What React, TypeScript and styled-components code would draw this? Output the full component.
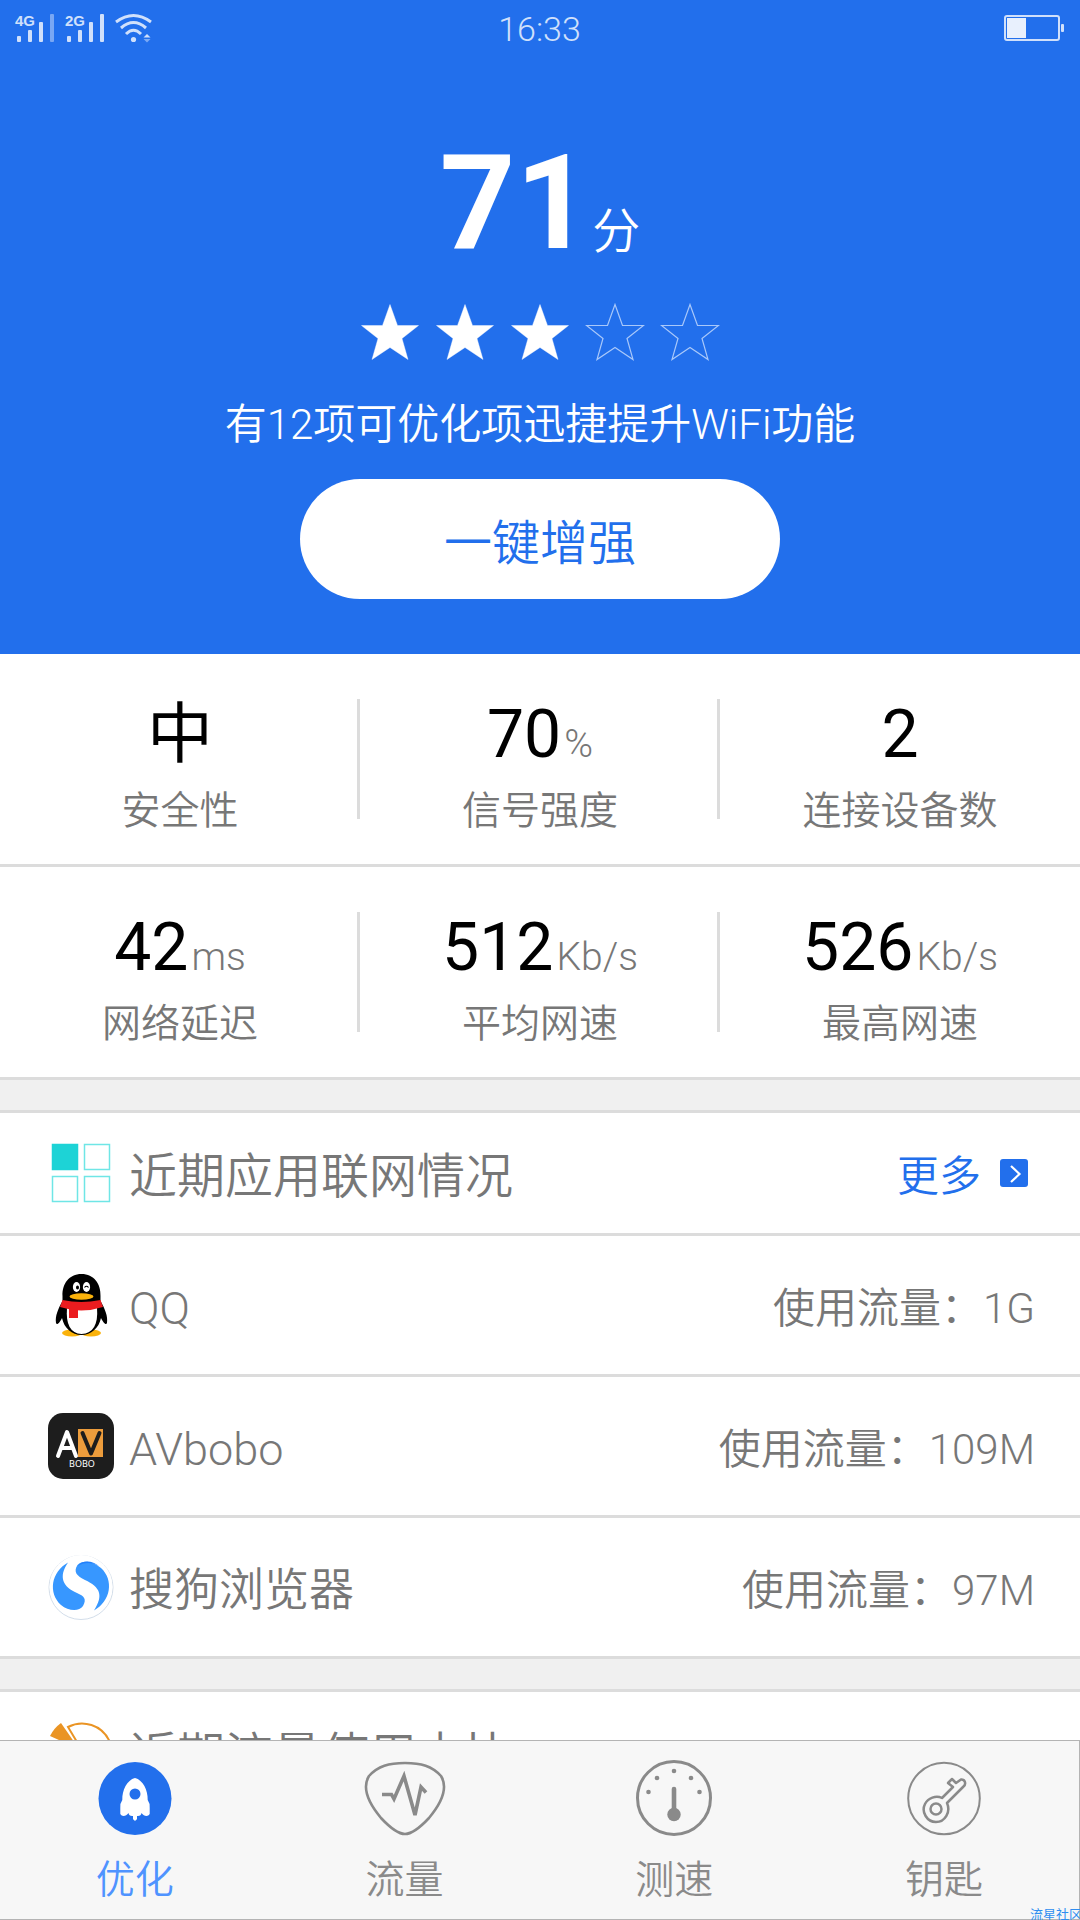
import React from 'react';
import styled, { createGlobalStyle } from 'styled-components';

const GlobalStyle = createGlobalStyle`
  * { box-sizing: border-box; }
  body {
    margin: 0;
    background: #f0f0f0;
    color: #777;
    font-family: Roboto, "Noto Sans CJK SC", sans-serif;
    font-weight: 350;
  }
  button { font-family: inherit; font-weight: inherit; }
  a { color: inherit; text-decoration: none; }
`;

const Screen = styled.div`
  position: relative;
  display: flex;
  flex-direction: column;
  height: 100vh;
  overflow: hidden;
`;

const Content = styled.main`
  flex: 1;
  min-height: 0;
  overflow-y: auto;
  scrollbar-width: none;
`;

const Hero = styled.header`
  display: flex;
  flex-direction: column;
  align-items: center;
  padding-bottom: 55px;
  background: #226fec;
  color: #fff;
`;

const StatusBar = styled.div`
  display: grid;
  grid-template-columns: 1fr auto 1fr;
  align-items: center;
  align-self: stretch;
  height: 56px;
  padding: 0 16px 0 15px;
  color: #d0e0fb;
`;

const Signals = styled.div`
  display: flex;
  gap: 11px;
`;

const Clock = styled.time`
  padding-top: 2px;
  font-size: 34px;
  line-height: 54px;
`;

const BatterySlot = styled.div`
  display: flex;
  justify-content: flex-end;
`;

const Score = styled.div`
  display: flex;
  align-items: baseline;
  gap: 1px;
  margin-top: 81px;
  font-size: 132px;
  line-height: 132px;
  font-weight: 700;
`;

const ScoreUnit = styled.span`
  font-size: 48px;
  line-height: 48px;
  font-weight: 350;
`;

const Stars = styled.div`
  display: flex;
  gap: 15px;
  margin: 34px 0;
`;

const Summary = styled.p`
  margin: 0 0 24px;
  font-size: 42px;
  line-height: 60px;
`;

const BoostButton = styled.button`
  width: 480px;
  height: 120px;
  border: 0;
  border-radius: 60px;
  background: #fff;
  color: #226fec;
  font-size: 48px;
`;

const StatGrid = styled.section`
  display: grid;
  grid-template-columns: repeat(3, 1fr);
  background: #fff;
`;

const StatCell = styled.div`
  display: flex;
  flex-direction: column;
  align-items: center;
  gap: 16px;
  padding: 45px 0 29px;
  border-bottom: 3px solid #dcdcdc;
  background: linear-gradient(#dcdcdc, #dcdcdc) right center / 3px 120px no-repeat;
  &:nth-child(3n) { background: none; }
`;

const StatValue = styled.div`
  color: #000;
  font-size: 66px;
  line-height: 72px;
  font-weight: 400;
`;

const StatUnit = styled.span`
  margin-left: 3px;
  color: #777;
  font-size: 39px;
  line-height: 39px;
  font-weight: 350;
`;

const StatLabel = styled.div`
  font-size: 39px;
  line-height: 48px;
`;

const Card = styled.section`
  margin-top: 30px;
  border-top: 3px solid #dcdcdc;
  background: #fff;
`;

const CardHeader = styled.div`
  display: flex;
  align-items: center;
  gap: 15px;
  height: 123px;
  padding: 0 51px 0 48px;
  border-bottom: 3px solid #dcdcdc;
`;

const CardTitle = styled.h2`
  flex: 1;
  margin: 0;
  padding-top: 8px;
  font-size: 48px;
  line-height: 60px;
  font-weight: 350;
`;

const MoreLink = styled.a`
  display: flex;
  align-items: center;
  gap: 19px;
  color: #226fec;
  font-size: 42px;
  line-height: 60px;
`;

const MoreText = styled.span`
  padding-top: 8px;
`;

const AppList = styled.ul`
  margin: 0;
  padding: 0;
  list-style: none;
`;

const AppRow = styled.li`
  display: flex;
  align-items: center;
  gap: 15px;
  height: 141px;
  padding: 0 45px 0 48px;
  border-bottom: 3px solid #dcdcdc;
`;

const AppName = styled.span`
  flex: 1;
  padding-top: 8px;
  font-size: 45px;
  line-height: 60px;
`;

const Usage = styled.span`
  padding-top: 8px;
  font-size: 42px;
  line-height: 60px;
`;

const TabBar = styled.nav`
  display: grid;
  grid-template-columns: repeat(4, 1fr);
  height: 180px;
  border: 1px solid #b4b4b4;
  border-left: 0;
  background: #f7f7f7;
`;

const Tab = styled.a<{ $active?: boolean }>`
  display: flex;
  flex-direction: column;
  align-items: center;
  gap: 12px;
  padding-top: 17px;
  color: ${(p) => (p.$active ? '#4f93ff' : '#8a8a8a')};
  font-size: 39px;
  line-height: 60px;
`;

const Watermark = styled.span`
  position: absolute;
  right: -2px;
  bottom: -4px;
  color: #2f8ef0;
  font-size: 13px;
  line-height: 18px;
  font-weight: 400;
`;

function Signal({ label, dim }: { label: string; dim?: boolean }) {
  return (
    <svg width="39" height="30" viewBox="0 0 39 30" fill="#d0e0fb">
      <text x="0" y="13" fontSize="15" fontWeight="700" fontFamily='"Liberation Sans", sans-serif'>{label}</text>
      <rect x="2" y="23" width="4" height="6" rx="1" />
      <rect x="13" y="17" width="4" height="12" rx="1" />
      <rect x="24" y="9" width="4" height="20" rx="1" />
      <rect x="35" y="1" width="4" height="28" rx="1" opacity={dim ? 0.5 : 1} />
    </svg>
  );
}

function WifiSignal() {
  return (
    <svg width="38" height="30" viewBox="0 0 38 30" fill="none" stroke="#d0e0fb" strokeWidth="3">
      <path d="M1 9Q18.500 -4 36 9" />
      <path d="M6 15Q18.500 4 31 15" />
      <path d="M11 21Q18.500 13.500 26 21" />
      <circle cx="18.500" cy="26.500" r="2.600" fill="#d0e0fb" stroke="none" />
      <path d="M28.500 24.500l3.500-3.500 3.500 3.500z" fill="#d0e0fb" stroke="none" />
      <path d="M28.500 26l3.500 3.500 3.500-3.500z" fill="#7ba9f4" stroke="none" />
    </svg>
  );
}

function Battery() {
  return (
    <svg width="60" height="26" viewBox="0 0 60 26">
      <rect x="1" y="1" width="54" height="24" rx="2" fill="none" stroke="#d0e0fb" strokeWidth="2" />
      <rect x="3" y="3" width="19" height="20" fill="#e8f0fd" />
      <rect x="57" y="9" width="3" height="8" rx="1" fill="#d0e0fb" />
    </svg>
  );
}

function Star({ filled }: { filled: boolean }) {
  return (
    <svg width="60" height="58" viewBox="0 0 60 58">
      <path
        d="M30 1.500L37.500 22.500H58.500L42 35.500L48 56.500L30 44.500L12 56.500L18 35.500L1.500 22.500H22.500Z"
        fill={filled ? '#fff' : 'none'}
        stroke={filled ? '#fff' : '#a9c8fa'}
        strokeWidth={filled ? 0.4 : 1.2}
      />
    </svg>
  );
}

function GridIcon() {
  return (
    <svg width="66" height="66" viewBox="0 0 66 66" fill="none" stroke="#6fe6e6" strokeWidth="1.500">
      <rect x="4.500" y="4.500" width="25" height="25" fill="#1dd3d6" stroke="#1dd3d6" />
      <rect x="36.500" y="4.500" width="25" height="25" />
      <rect x="4.500" y="36.500" width="25" height="25" />
      <rect x="36.500" y="36.500" width="25" height="25" />
    </svg>
  );
}

function PieIcon() {
  return (
    <svg width="66" height="66" viewBox="0 0 66 66">
      <path d="M31 30L2 17Q6 9 13 4Z" fill="#ea9424" />
      <path d="M35 33L20 8A30 30 0 1 1 6 45Z" fill="none" stroke="#ea9424" strokeWidth="2" />
    </svg>
  );
}

function QQIcon() {
  return (
    <svg width="66" height="66" viewBox="0 0 66 66">
      <ellipse cx="24" cy="61" rx="10" ry="3.500" fill="#fab20b" />
      <ellipse cx="43" cy="61" rx="10" ry="3.500" fill="#fab20b" />
      <path d="M33.500 2C21 2 14 12 14.500 24V29C10 37 7 44 8 51C9 54 12 50 14 46C16 56 24 63 33.500 63S51 56 53 46C55 50 58 54 59 51C60 44 57 37 52.500 29V24C53 12 46 2 33.500 2Z" fill="#000" />
      <path d="M19 36H49Q51 61 33.500 62Q17 61 19 36Z" fill="#fff" />
      <path d="M14.500 28Q33 32 52.500 28L55 35Q33 42 12 35Z" fill="#eb1c1f" />
      <path d="M21 35H30V46H21Z" fill="#eb1c1f" />
      <ellipse cx="28.500" cy="15" rx="3.600" ry="5" fill="#fff" />
      <ellipse cx="38.500" cy="15" rx="3.600" ry="5" fill="#fff" />
      <ellipse cx="29.500" cy="15.500" rx="1.500" ry="2" fill="#000" />
      <path d="M36.500 15.500Q38.500 13 40.500 15.500" fill="none" stroke="#000" strokeWidth="1.200" />
      <ellipse cx="33.500" cy="24.500" rx="12" ry="3.200" fill="#fab20b" />
    </svg>
  );
}

function AvboboIcon() {
  return (
    <svg width="66" height="66" viewBox="0 0 66 66">
      <rect width="66" height="66" rx="15" fill="#1d1d1d" />
      <rect x="30" y="16" width="25" height="28" fill="#ec9c3c" />
      <path d="M10 43L19 19L28 43M13 35H25" fill="none" stroke="#fff" strokeWidth="4" strokeLinecap="round" strokeLinejoin="round" />
      <path d="M34.500 20L43 40.500L51.500 20" fill="none" stroke="#1d1d1d" strokeWidth="4" strokeLinecap="round" strokeLinejoin="round" />
      <text x="34" y="54" textAnchor="middle" fontSize="9" fontWeight="400" fill="#fff" fontFamily='"Noto Sans", sans-serif'>BOBO</text>
    </svg>
  );
}

function SogouIcon() {
  return (
    <svg width="66" height="66" viewBox="0 0 66 66">
      <circle cx="33" cy="33.500" r="32" fill="#fff" stroke="#d3deea" />
      <circle cx="33" cy="32.500" r="31.500" fill="#fff" />
      <path d="M20 8.500C3 18 0 39 13 51C20 57 31 58 35 52C39 45 36 42 29 39C15 33 10 23 20 8.500Z" fill="#3797ff" />
      <path d="M46 56.500C63 47 66 26 53 14C46 8 35 5 29.500 11C25 18 29 22 37 26C52 33 56 41 46 56.500Z" fill="#3797ff" />
      <path d="M29.500 12C35 5 45 7 51 12C44 8 36 8 29.500 12Z" fill="#2280fb" />
    </svg>
  );
}

function ChevronBox() {
  return (
    <svg width="29" height="28" viewBox="0 0 29 28">
      <rect width="28" height="28" rx="3" fill="#226fec" />
      <path d="M11 7L19.500 15L11 23" fill="none" stroke="#fff" strokeWidth="2.200" />
    </svg>
  );
}

function RocketIcon() {
  return (
    <svg width="82" height="80" viewBox="0 0 82 80">
      <circle cx="41" cy="40.500" r="36.500" fill="#226fec" />
      <path d="M41 20C33 22 28 32 28.300 42Q26 45 26.300 50V56C28 59 32 58.500 34.500 55Q35 58.500 39 58V61Q41 64.500 43 61V58Q47 58.500 47.500 55C50 58.500 54 59 55.700 56V50Q56 45 53.700 42C54 32 49 22 41 20Z" fill="#fff" />
      <circle cx="41" cy="36" r="5.500" fill="#226fec" />
    </svg>
  );
}

function PulseIcon() {
  return (
    <svg width="82" height="80" viewBox="0 0 82 80" fill="none" stroke="#8a8a8a">
      <path d="M41 5C57 5 68 8 77 18C85 31 75 48 65 60Q50 76 41 76Q32 76 17 60C7 48 -3 31 5 18C14 8 25 5 41 5Z" strokeWidth="2.600" />
      <path d="M18 36.500H27.500L30 41L40 18L51 57L57 29L62 34.500" strokeWidth="3.600" />
    </svg>
  );
}

function GaugeIcon() {
  return (
    <svg width="82" height="80" viewBox="0 0 82 80" fill="#8a8a8a">
      <circle cx="41" cy="40" r="36.500" fill="none" stroke="#8a8a8a" strokeWidth="3" />
      <circle cx="15.500" cy="34" r="2.300" />
      <circle cx="24" cy="20" r="2.300" />
      <circle cx="41" cy="13" r="2.300" />
      <circle cx="58" cy="20" r="2.300" />
      <circle cx="66.500" cy="34" r="2.300" />
      <path d="M41 31V56" stroke="#8a8a8a" strokeWidth="4.600" strokeLinecap="round" />
      <circle cx="41" cy="56.500" r="6.700" />
    </svg>
  );
}

function KeyIcon() {
  return (
    <svg width="82" height="80" viewBox="0 0 82 80" fill="none" stroke="#8a8a8a" strokeWidth="2">
      <circle cx="41" cy="40.500" r="35.800" />
      <circle cx="33" cy="51" r="5.500" strokeWidth="2.500" />
      <path d="M39 40L50 29L45 25L49 21L53 25L58 21.500C62 21 63.500 26 60.500 28.500L44 45C48 54 42 64 33 64C24 64 18 54 22 46C25 40 33 37 39 40Z" strokeWidth="2.500" strokeLinejoin="round" />
    </svg>
  );
}

const stats = [
  { value: '中', unit: '', label: '安全性' },
  { value: '70', unit: '%', label: '信号强度' },
  { value: '2', unit: '', label: '连接设备数' },
  { value: '42', unit: 'ms', label: '网络延迟' },
  { value: '512', unit: 'Kb/s', label: '平均网速' },
  { value: '526', unit: 'Kb/s', label: '最高网速' },
];

const apps = [
  { name: 'QQ', usage: '1G', Icon: QQIcon },
  { name: 'AVbobo', usage: '109M', Icon: AvboboIcon },
  { name: '搜狗浏览器', usage: '97M', Icon: SogouIcon },
];

const tabs = [
  { label: '优化', Icon: RocketIcon },
  { label: '流量', Icon: PulseIcon },
  { label: '测速', Icon: GaugeIcon },
  { label: '钥匙', Icon: KeyIcon },
];

export default function App() {
  return (
    <Screen>
      <GlobalStyle />
      <Content>
        <Hero>
          <StatusBar>
            <Signals>
              <Signal label="4G" dim />
              <Signal label="2G" />
              <WifiSignal />
            </Signals>
            <Clock>16:33</Clock>
            <BatterySlot>
              <Battery />
            </BatterySlot>
          </StatusBar>
          <Score>
            71<ScoreUnit>分</ScoreUnit>
          </Score>
          <Stars>
            {[1, 2, 3, 4, 5].map((n) => (
              <Star key={n} filled={n <= 3} />
            ))}
          </Stars>
          <Summary>有12项可优化项迅捷提升WiFi功能</Summary>
          <BoostButton type="button">一键增强</BoostButton>
        </Hero>

        <StatGrid>
          {stats.map((s) => (
            <StatCell key={s.label}>
              <StatValue>
                {s.value}
                {s.unit && <StatUnit>{s.unit}</StatUnit>}
              </StatValue>
              <StatLabel>{s.label}</StatLabel>
            </StatCell>
          ))}
        </StatGrid>

        <Card>
          <CardHeader>
            <GridIcon />
            <CardTitle>近期应用联网情况</CardTitle>
            <MoreLink href="#more">
              <MoreText>更多</MoreText>
              <ChevronBox />
            </MoreLink>
          </CardHeader>
          <AppList>
            {apps.map(({ name, usage, Icon }) => (
              <AppRow key={name}>
                <Icon />
                <AppName>{name}</AppName>
                <Usage>使用流量：{usage}</Usage>
              </AppRow>
            ))}
          </AppList>
        </Card>

        <Card>
          <CardHeader>
            <PieIcon />
            <CardTitle>近期流量使用占比</CardTitle>
          </CardHeader>
        </Card>
      </Content>

      <TabBar>
        {tabs.map(({ label, Icon }, i) => (
          <Tab key={label} href={`#tab-${i}`} $active={i === 0}>
            <Icon />
            {label}
          </Tab>
        ))}
      </TabBar>
      <Watermark>流星社区</Watermark>
    </Screen>
  );
}
